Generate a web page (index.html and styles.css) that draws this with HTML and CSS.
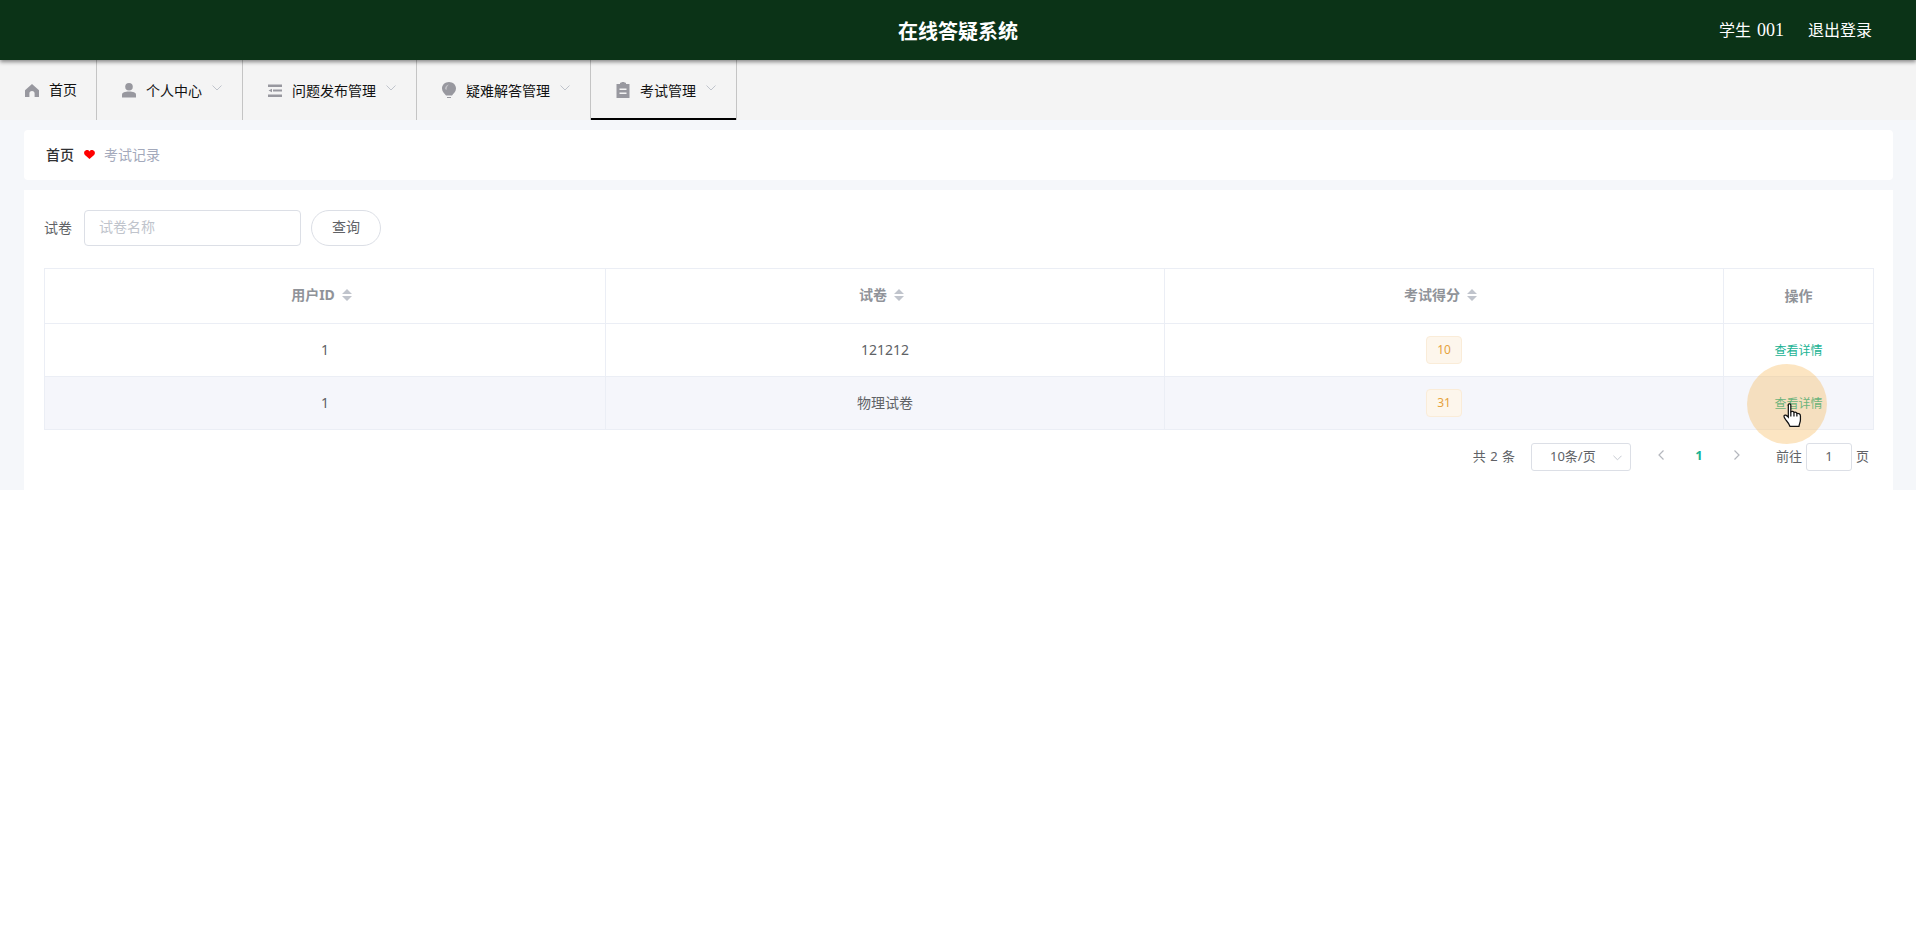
FILE: index.html
```html
<!DOCTYPE html>
<html lang="zh-CN">
<head>
    <meta charset="UTF-8">
    <title>在线答疑系统</title>
    <link rel="stylesheet" href="styles.css">
</head>
<body>
    <header class="top-bar">
        <div class="site-title">在线答疑系统</div>
        <div class="user-box">
            <span>学生 <span class="user-num">001</span></span>
            <span>退出登录</span>
        </div>
    </header>

    <nav class="nav-bar">
        <div class="nav-item nav-home">
            <svg class="nav-icon" viewBox="0 0 14 16"><path d="M7 2 L14 8.2 V15 H9.6 V11.5 A2.6 2.6 0 0 0 4.4 11.5 V15 H0 V8.2 Z"/></svg>
            <span>首页</span>
        </div>
        <div class="nav-item">
            <svg class="nav-icon" viewBox="0 0 14 16"><circle cx="7" cy="4.8" r="3.8"/><path d="M0 15.5 V12.8 C0 10.4 3 9.6 7 9.6 C11 9.6 14 10.4 14 12.8 V15.5 Z"/></svg>
            <span>个人中心</span>
            <svg class="nav-arrow" viewBox="0 0 10 6"><path d="M0.5 0.5 L5 5 L9.5 0.5"/></svg>
        </div>
        <div class="nav-item">
            <svg class="nav-icon" viewBox="0 0 14 16"><path d="M0 2.5 H14 V5 H0 Z M5 7.5 H14 V9.5 H5 Z M0 12.5 H14 V15 H0 Z M0.5 8.5 L4 6.8 V10.2 Z"/></svg>
            <span>问题发布管理</span>
            <svg class="nav-arrow" viewBox="0 0 10 6"><path d="M0.5 0.5 L5 5 L9.5 0.5"/></svg>
        </div>
        <div class="nav-item">
            <svg class="nav-icon" viewBox="0 0 14 16">
                <path d="M7 0 C10.8 0 14 2.8 14 6.4 C14 9.6 11.4 11.6 10 13.4 H4 C2.6 11.6 0 9.6 0 6.4 C0 2.8 3.2 0 7 0 Z M5 15 H9 V16 H5 Z"/>
                <path class="bulb-shine" d="M3 7 C3 4.4 4.6 2.8 7 2.4 C5.4 3.6 4.6 5.2 4.6 8 Z"/>
            </svg>
            <span>疑难解答管理</span>
            <svg class="nav-arrow" viewBox="0 0 10 6"><path d="M0.5 0.5 L5 5 L9.5 0.5"/></svg>
        </div>
        <div class="nav-item nav-active">
            <svg class="nav-icon" viewBox="0 0 14 16"><path fill-rule="evenodd" d="M0.5 2 H4 V0.8 H5.5 V0 H8.5 V0.8 H10 V2 H13.5 V16 H0.5 Z M3.5 6.5 V8 H10.5 V6.5 Z M3.5 10.5 V12 H10.5 V10.5 Z"/></svg>
            <span>考试管理</span>
            <svg class="nav-arrow" viewBox="0 0 10 6"><path d="M0.5 0.5 L5 5 L9.5 0.5"/></svg>
        </div>
    </nav>

    <main class="page">
        <div class="crumb-card">
            <span class="crumb-home">首页</span>
            <svg class="crumb-heart" viewBox="0 0 11 9"><path d="M5.5 9 L0.9 5 C-0.5 3.4 0 0.8 2 0.2 C3.4 -0.2 4.8 0.3 5.5 1.4 C6.2 0.3 7.6 -0.2 9 0.2 C11 0.8 11.5 3.4 10.1 5 Z"/></svg>
            <span class="crumb-current">考试记录</span>
        </div>

        <div class="main-card">
            <div class="search-row">
                <span class="search-label">试卷</span>
                <div class="search-input">试卷名称</div>
                <div class="search-btn">查询</div>
            </div>

            <table class="data-table">
                <colgroup>
                    <col class="col-wide">
                    <col class="col-mid">
                    <col class="col-mid">
                    <col class="col-action">
                </colgroup>
                <thead>
                    <tr>
                        <th class="sortable">用户ID<svg class="sort-icon" viewBox="0 0 10 12"><path d="M5 0 L10 5 H0 Z M0 7 H10 L5 12 Z"/></svg></th>
                        <th class="sortable">试卷<svg class="sort-icon" viewBox="0 0 10 12"><path d="M5 0 L10 5 H0 Z M0 7 H10 L5 12 Z"/></svg></th>
                        <th class="sortable">考试得分<svg class="sort-icon" viewBox="0 0 10 12"><path d="M5 0 L10 5 H0 Z M0 7 H10 L5 12 Z"/></svg></th>
                        <th>操作</th>
                    </tr>
                </thead>
                <tbody>
                    <tr>
                        <td>1</td>
                        <td>121212</td>
                        <td class="score-cell"><span class="score-tag">10</span></td>
                        <td><span class="detail-link">查看详情</span></td>
                    </tr>
                    <tr class="row-stripe">
                        <td>1</td>
                        <td>物理试卷</td>
                        <td class="score-cell"><span class="score-tag">31</span></td>
                        <td><span class="detail-link">查看详情</span></td>
                    </tr>
                </tbody>
            </table>

            <div class="pager">
                <span class="pager-total">共 2 条</span>
                <div class="pager-select">
                    <span>10条/页</span>
                    <svg class="pager-select-arrow" viewBox="0 0 10 6"><path d="M0.5 0.5 L5 5 L9.5 0.5"/></svg>
                </div>
                <div class="pager-btn">
                    <svg class="pager-arrow" viewBox="0 0 6 10"><path d="M5.5 0.5 L1 5 L5.5 9.5"/></svg>
                </div>
                <div class="pager-btn pager-current">1</div>
                <div class="pager-btn">
                    <svg class="pager-arrow" viewBox="0 0 6 10"><path d="M0.5 0.5 L5 5 L0.5 9.5"/></svg>
                </div>
                <span class="pager-goto">前往</span>
                <div class="pager-input">1</div>
                <span class="pager-unit">页</span>
            </div>
        </div>
    </main>

    <!-- click highlight + mouse pointer, sits over the table -->
    <div class="click-spot"></div>
    <svg class="hand-cursor" viewBox="0 0 18 23">
        <path d="M5 1.8 C5 0.4 7.4 0.4 7.4 1.8 V8.4 C8.8 7.8 10 8 10.4 9 C11.8 8.6 12.9 9 13.2 10 C14.8 9.8 16.6 10.4 16.6 12.4 V16 C16.6 18.5 15.6 19.5 15.2 22.4 H6.6 C6 20.2 4.4 18.4 2.6 16.2 C1.2 14.4 0.4 13 1 12 C1.7 11 3.2 11.6 5 13.6 Z"/>
        <path d="M7.4 8.4 V13 M10.4 9 V13 M13.2 10 V13"/>
    </svg>
</body>
</html>
```

FILE: styles.css
```css
* {
    box-sizing: border-box;
}

body {
    margin: 0;
    background: #fff;
    font-family: "Noto Sans", "Noto Sans CJK SC", sans-serif;
    font-size: 14px;
    color: #606266;
}

/* top bar */
.top-bar {
    position: relative;
    z-index: 2;
    height: 60px;
    background: #0b3317;
    box-shadow: 0 2px 4px rgba(0, 0, 0, 0.45);
    color: #fff;
    display: flex;
    align-items: center;
    justify-content: center;
}

.site-title {
    font-size: 20px;
    font-weight: bold;
}

.user-box {
    position: absolute;
    right: 44px;
    top: 0;
    height: 60px;
    padding-bottom: 2px;
    display: flex;
    align-items: center;
    gap: 24px;
    font-family: "Liberation Serif", "Noto Sans CJK SC", serif;
    font-size: 16px;
}

.user-num {
    margin-left: 2px;
    font-size: 18px;
}

/* nav */
.nav-bar {
    height: 60px;
    background: #f4f4f4;
    display: flex;
}

.nav-item {
    height: 60px;
    padding: 0 20px 0 25px;
    border-right: 1px solid #c4c4c4;
    display: flex;
    align-items: center;
    color: #111;
}

.nav-home {
    padding-left: 25px;
    padding-right: 19px;
}

.nav-home span {
    margin-top: -2px;
}

.nav-active {
    box-shadow: inset 0 -2px 0 #000;
}

.nav-icon {
    width: 14px;
    height: 16px;
    margin-right: 10px;
    fill: #98989f;
}

.bulb-shine {
    fill: #c2c2c7;
}

.nav-arrow {
    width: 10px;
    height: 6px;
    margin-left: 10px;
    margin-top: -4px;
    fill: none;
    stroke: #c0c4cc;
    stroke-width: 1;
}

/* page */
.page {
    height: 370px;
    background: #f5f7fa;
    padding: 10px 23px 0 24px;
}

.crumb-card {
    height: 50px;
    background: #fff;
    border-radius: 4px;
    padding-left: 22px;
    padding-bottom: 2px;
    display: flex;
    align-items: center;
}

.crumb-home {
    color: #303133;
    font-weight: 500;
}

.crumb-heart {
    width: 11px;
    height: 9px;
    margin: 0 9px 0 10px;
    fill: #f00;
}

.crumb-current {
    color: #a3a9bb;
}

.main-card {
    height: 300px;
    margin-top: 10px;
    background: #fff;
    padding: 20px 20px 0;
}

.search-row {
    height: 36px;
    display: flex;
    align-items: center;
}

.search-label {
    width: 40px;
    margin-bottom: 2px;
}

.search-input {
    width: 217px;
    height: 36px;
    padding-left: 14px;
    border: 1px solid #dcdfe6;
    border-radius: 4px;
    color: #c0c4cc;
    line-height: 31px;
}

.search-btn {
    width: 70px;
    height: 36px;
    margin-left: 10px;
    border: 1px solid #dcdfe6;
    border-radius: 18px;
    text-align: center;
    line-height: 31px;
    color: #606266;
}

/* table */
.data-table {
    width: 1829px;
    margin-top: 22px;
    table-layout: fixed;
    border-collapse: collapse;
    border: 1px solid #ebeef5;
}

.col-wide {
    width: 561px;
}

.col-mid {
    width: 559px;
}

.col-action {
    width: 150px;
}

.data-table th,
.data-table td {
    padding: 0 0 2px;
    border: 1px solid #ebeef5;
    text-align: center;
}

.data-table th {
    height: 55px;
    color: #909399;
    font-size: 14px;
    font-weight: bold;
}

.data-table .sortable {
    padding-bottom: 4px;
}

.data-table td {
    height: 53px;
}

.data-table .score-cell {
    padding: 0;
}

.row-stripe td {
    background: #f5f6fb;
}

.sort-icon {
    width: 10px;
    height: 12px;
    margin: 0 7px;
    vertical-align: -1px;
    fill: #c0c4cc;
}

.score-tag {
    display: block;
    width: 36px;
    height: 28px;
    margin: 0 auto;
    background: #fdf6ec;
    border: 1px solid #faecd8;
    border-radius: 4px;
    color: #e6a23c;
    font-size: 12px;
    line-height: 25px;
}

.detail-link {
    color: #19b394;
    font-size: 12px;
}

/* pagination */
.pager {
    height: 28px;
    margin-top: 13px;
    padding-right: 4px;
    display: flex;
    align-items: center;
    justify-content: flex-end;
    font-size: 13px;
}

.pager-total {
    margin-right: 16px;
    margin-bottom: 4px;
    word-spacing: 1px;
}

.pager-select {
    width: 100px;
    height: 28px;
    padding-left: 18px;
    padding-bottom: 4px;
    border: 1px solid #dcdfe6;
    border-radius: 3px;
    display: flex;
    align-items: center;
    margin-right: 11px;
    position: relative;
}

.pager-select-arrow {
    position: absolute;
    right: 8px;
    top: 11px;
    width: 9px;
    height: 6px;
    fill: none;
    stroke: #c0c4cc;
}

.pager-btn {
    width: 38px;
    height: 28px;
    padding-bottom: 4px;
    display: flex;
    align-items: center;
    justify-content: center;
}

.pager-current {
    color: #19b394;
    font-weight: bold;
}

.pager-arrow {
    width: 6px;
    height: 10px;
    fill: none;
    stroke: #b4b7bd;
    stroke-width: 1.2;
}

.pager-goto {
    margin-left: 20px;
    margin-right: 4px;
    margin-bottom: 4px;
}

.pager-input {
    width: 46px;
    height: 28px;
    margin-right: 4px;
    margin-top: -1px;
    border: 1px solid #dcdfe6;
    border-radius: 3px;
    text-align: center;
    line-height: 25px;
}

.pager-unit {
    margin-bottom: 4px;
}

/* overlay */
.click-spot {
    position: absolute;
    left: 1747px;
    top: 364px;
    width: 80px;
    height: 80px;
    border-radius: 50%;
    background: rgba(245, 180, 80, 0.35);
}

.hand-cursor {
    position: absolute;
    left: 1783px;
    top: 403px;
    width: 19px;
    height: 24px;
    fill: #fff;
    stroke: #111;
    stroke-width: 1.2;
}
```
